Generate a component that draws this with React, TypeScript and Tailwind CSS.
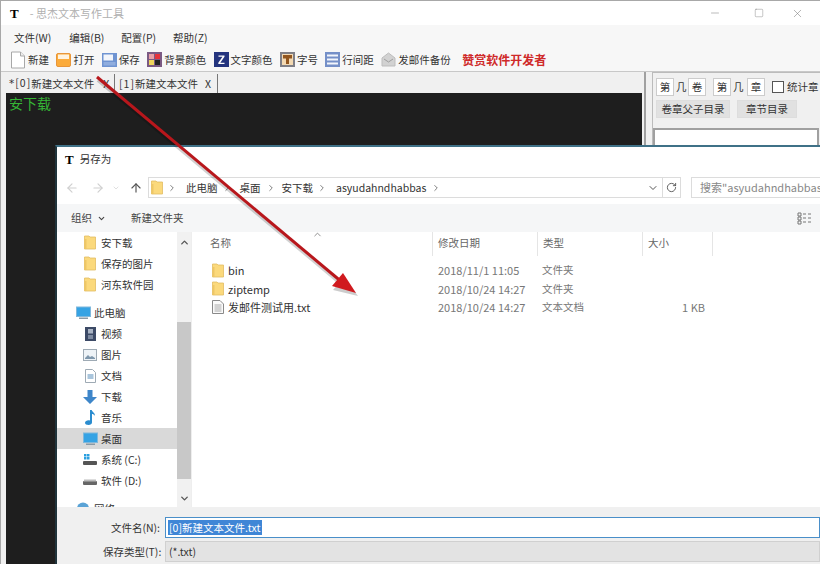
import { ArrowLeft, ArrowRight, ArrowUp, ChevronDown, ChevronRight, ChevronUp, Minus, RotateCw, Square, X } from 'lucide-react'

const FONT = "font-['Noto_Sans_CJK_SC','Liberation_Sans',sans-serif]"

function Folder() {
  return (
    <svg width="12" height="15" viewBox="0 0 12 15" className="shrink-0">
      <path d="M.5 1h4.500l1 1h5.500v12H.5z" fill="#fbd97c" stroke="#e2bd62" strokeWidth="0.8" />
      <path d="M.5 4h2v10h-2z" fill="#eec766" />
    </svg>
  )
}

function ToolIcon({ kind }: { kind: string }) {
  if (kind === 'new')
    return (
      <svg width="16" height="18" viewBox="0 0 16 18">
        <path d="M1.5 1h9l4 4v12h-13z" fill="#fff" stroke="#a8a8a8" />
        <path d="M10.5 1v4h4" fill="#eee" stroke="#a8a8a8" />
      </svg>
    )
  if (kind === 'open')
    return (
      <svg width="15" height="14" viewBox="0 0 15 14">
        <rect x="0.5" y="0.5" width="14" height="13" rx="1.5" fill="#fbab3b" stroke="#e8963a" />
        <rect x="2" y="1.5" width="11" height="4.5" fill="#fff3df" />
      </svg>
    )
  if (kind === 'save')
    return (
      <svg width="15" height="14" viewBox="0 0 15 14">
        <rect width="15" height="14" fill="#6f94d2" />
        <rect x="1.500" y="1.500" width="9.500" height="6" fill="#f2f5fb" />
        <rect x="1.500" y="9" width="12" height="3.500" fill="#8fadde" />
      </svg>
    )
  if (kind === 'bg')
    return (
      <svg width="15" height="15" viewBox="0 0 15 15">
        <rect width="15" height="15" fill="#7b5a83" />
        <rect x="2" y="2" width="5" height="5" fill="#e8a0a6" />
        <rect x="8" y="2" width="5" height="5" fill="#e5343c" />
        <rect x="2" y="8" width="5" height="5" fill="#efd55b" />
        <rect x="8" y="8" width="5" height="5" fill="#222" />
      </svg>
    )
  if (kind === 'color')
    return (
      <svg width="15" height="15" viewBox="0 0 15 15">
        <rect width="15" height="15" fill="#25357f" />
        <path d="M4.5 3.5h6v1.2l-4.2 6h4.2v1.300h-6.200v-1.200l4.200-6h-4z" fill="#fff" />
      </svg>
    )
  if (kind === 'size')
    return (
      <svg width="15" height="15" viewBox="0 0 15 15">
        <rect width="15" height="15" fill="#7f7f86" />
        <rect x="2" y="2" width="11" height="11" fill="#f3d9b2" />
        <path d="M3 3h9v3.500h-3v5.500h-3v-5.500h-3z" fill="#92561f" />
      </svg>
    )
  if (kind === 'line')
    return (
      <svg width="15" height="15" viewBox="0 0 15 15">
        <rect width="15" height="15" fill="#7590c8" />
        <rect x="2" y="2.500" width="11" height="2" fill="#f3f6fc" />
        <rect x="2" y="6.500" width="11" height="2" fill="#f3f6fc" />
        <rect x="2" y="10.500" width="11" height="2" fill="#f3f6fc" />
      </svg>
    )
  return (
    <svg width="15" height="15" viewBox="0 0 15 15">
      <path d="M1 6l6.500-5 6.500 5v8H1z" fill="#d2d2d2" stroke="#bdbdbd" />
      <path d="M3 7l4.500 3L12 7" fill="none" stroke="#9f9f9f" />
    </svg>
  )
}

function NavIcon({ kind }: { kind: string }) {
  if (kind === 'folder') return <Folder />
  if (kind === 'pc' || kind === 'desktop')
    return (
      <svg width="15" height="14" viewBox="0 0 15 14" className="shrink-0">
        <rect x="0.500" y="1" width="14" height="9.500" fill="#36a3e4" stroke="#7fb8dc" />
        <rect x="3" y="11.500" width="9" height="1.500" fill="#8a9aa6" />
      </svg>
    )
  if (kind === 'video')
    return (
      <svg width="11" height="14" viewBox="0 0 11 14" className="shrink-0">
        <rect width="11" height="14" fill="#3c4a66" />
        <rect x="3" y="2" width="5" height="4.500" fill="#aab4c4" />
        <rect x="3" y="8" width="5" height="4" fill="#7d8aa0" />
      </svg>
    )
  if (kind === 'image')
    return (
      <svg width="14" height="12" viewBox="0 0 14 12" className="shrink-0">
        <rect x="0.500" y="0.500" width="13" height="11" fill="#eef3f7" stroke="#9eaab4" />
        <path d="M2 9l3-3 2 2 2-1 3 2v1H2z" fill="#7f97ac" />
      </svg>
    )
  if (kind === 'doc')
    return (
      <svg width="11" height="14" viewBox="0 0 11 14" className="shrink-0">
        <path d="M.5.500h7l3 3v10H.5z" fill="#fff" stroke="#9eaab4" />
        <rect x="2.500" y="5" width="6" height="5" fill="#a9c5dc" />
      </svg>
    )
  if (kind === 'down')
    return (
      <svg width="14" height="14" viewBox="0 0 14 14" className="shrink-0">
        <path d="M4.500 0h5v7H14l-7 7-7-7h4.500z" fill="#3e86c9" />
      </svg>
    )
  if (kind === 'music')
    return (
      <svg width="11" height="15" viewBox="0 0 11 15" className="shrink-0">
        <path d="M5 0h1.800c.2 2 3.200 2.500 3.200 6-1-1.500-2-2-3-2v8.500C7 14 5.500 15 3.500 15 1.500 15 0 14 0 12.700S1.800 10.300 3.500 10.300c.6 0 1.100.1 1.500.3z" fill="#2a8ccf" />
      </svg>
    )
  if (kind === 'sys')
    return (
      <svg width="14" height="13" viewBox="0 0 14 13" className="shrink-0">
        <rect x="0" y="8" width="14" height="4" rx="1" fill="#555" />
        <rect x="1" y="1" width="2.500" height="2.500" fill="#2a9fe0" />
        <rect x="4" y="1" width="2.500" height="2.500" fill="#2a9fe0" />
        <rect x="1" y="4" width="2.500" height="2.500" fill="#2a9fe0" />
        <rect x="4" y="4" width="2.500" height="2.500" fill="#2a9fe0" />
      </svg>
    )
  if (kind === 'net')
    return (
      <svg width="14" height="13" viewBox="0 0 14 13" className="shrink-0">
        <circle cx="7" cy="6.500" r="6" fill="#5aa3d6" />
      </svg>
    )
  return (
    <svg width="14" height="13" viewBox="0 0 14 13" className="shrink-0">
      <rect x="0" y="7" width="14" height="4" rx="1" fill="#666" />
      <rect x="1" y="5.500" width="12" height="2" fill="#bbb" />
    </svg>
  )
}

const tools = [
  { kind: 'new', label: '新建' },
  { kind: 'open', label: '打开' },
  { kind: 'save', label: '保存' },
  { kind: 'bg', label: '背景颜色' },
  { kind: 'color', label: '文字颜色' },
  { kind: 'size', label: '字号' },
  { kind: 'line', label: '行间距' },
  { kind: 'mail', label: '发邮件备份' },
]

const navItems = [
  { kind: 'folder', label: '安下载', pad: 'pl-[26px]' },
  { kind: 'folder', label: '保存的图片', pad: 'pl-[26px]' },
  { kind: 'folder', label: '河东软件园', pad: 'pl-[26px]' },
  { kind: 'spacer', label: '', pad: '' },
  { kind: 'pc', label: '此电脑', pad: 'pl-[19px]' },
  { kind: 'video', label: '视频', pad: 'pl-[26px]' },
  { kind: 'image', label: '图片', pad: 'pl-[26px]' },
  { kind: 'doc', label: '文档', pad: 'pl-[26px]' },
  { kind: 'down', label: '下载', pad: 'pl-[26px]' },
  { kind: 'music', label: '音乐', pad: 'pl-[26px]' },
  { kind: 'desktop', label: '桌面', pad: 'pl-[26px]' },
  { kind: 'sys', label: '系统 (C:)', pad: 'pl-[26px]' },
  { kind: 'disk', label: '软件 (D:)', pad: 'pl-[26px]' },
  { kind: 'spacer', label: '', pad: '' },
  { kind: 'net', label: '网络', pad: 'pl-[19px]' },
]

const files = [
  { icon: 'folder', name: 'bin', date: '2018/11/1 11:05', type: '文件夹', size: '' },
  { icon: 'folder', name: 'ziptemp', date: '2018/10/24 14:27', type: '文件夹', size: '' },
  { icon: 'txt', name: '发邮件测试用.txt', date: '2018/10/24 14:27', type: '文本文档', size: '1 KB' },
]

function SaveDialog() {
  return (
    <div className="absolute left-[54px] top-[144px] flex h-[420px] w-[765px] flex-col border-l-2 border-t-2 border-l-[#20343c] border-t-[#3f7187] bg-white">
      <div className="flex h-[24px] shrink-0 items-center gap-[6px] pl-[8px] text-[10.5px] text-[#333]">
        <span className="font-['Liberation_Serif',serif] text-[13px] font-bold leading-none text-black">T</span>
        <span>另存为</span>
      </div>

      <div className="flex h-[33px] shrink-0 items-center pl-[8px]">
        <ArrowLeft size={14} className="shrink-0 text-[#d0d0d0]" />
        <ArrowRight size={14} className="ml-[12px] shrink-0 text-[#d0d0d0]" />
        <ChevronDown size={8} className="ml-[7px] shrink-0 text-[#d0d0d0]" />
        <ArrowUp size={14} className="ml-[9px] shrink-0 text-[#555]" />
        <div className="ml-[5px] flex h-[21px] w-[533px] shrink-0 items-center border border-[#dcdcdc] pl-[2px] text-[10.5px] text-[#333]">
          <Folder />
          <ChevronRight size={10} className="ml-[4px] shrink-0 text-[#666]" />
          <span className="ml-[9px]">此电脑</span>
          <ChevronRight size={10} className="ml-[4px] shrink-0 text-[#666]" />
          <span className="ml-[8px]">桌面</span>
          <ChevronRight size={10} className="ml-[5px] shrink-0 text-[#666]" />
          <span className="ml-[6px]">安下载</span>
          <ChevronRight size={10} className="ml-[4px] shrink-0 text-[#666]" />
          <span className="ml-[9px]">asyudahndhabbas</span>
          <ChevronRight size={10} className="ml-[5px] shrink-0 text-[#666]" />
          <ChevronDown size={12} className="ml-auto mr-[3px] shrink-0 text-[#555]" />
          <div className="flex h-full w-[18px] shrink-0 items-center justify-center border-l border-[#dcdcdc]">
            <RotateCw size={11} className="text-[#555]" />
          </div>
        </div>
        <div className="ml-[10px] flex h-[21px] w-[135px] shrink-0 items-center overflow-hidden whitespace-nowrap border border-[#dcdcdc] pl-[8px] text-[11px] text-[#888]">
          搜索"asyudahndhabbas
        </div>
      </div>

      <div className="flex h-[28px] shrink-0 items-center bg-[#f5f6f7] pl-[14px] pr-[8px] text-[10.5px] text-[#444]">
        <span>组织</span>
        <ChevronDown size={9} strokeWidth={3} className="ml-[5px] text-[#444]" />
        <span className="ml-[25px]">新建文件夹</span>
        <svg width="15" height="13" viewBox="0 0 15 13" className="ml-auto text-[#777]">
          <path d="M1 1h3v3H1zM1 5h3v3H1zM1 9h3v3H1z" fill="none" stroke="currentColor" />
          <path d="M6 2h3M11 2h3M6 6h3M11 6h3M6 10h3M11 10h3" stroke="currentColor" />
        </svg>
      </div>

      <div className="flex min-h-0 flex-1">
        <div className="w-[120px] shrink-0 overflow-hidden text-[10.5px] text-[#333]">
          {navItems.map((n, i) =>
            n.kind === 'spacer' ? (
              <div key={i} className="h-[7px]" />
            ) : (
              <div key={i} className={`flex h-[21px] items-center gap-[4px] ${n.pad} ${n.label === '桌面' ? 'bg-[#d9d9d9]' : ''}`}>
                <span className="flex w-[14px] justify-center">
                  <NavIcon kind={n.kind} />
                </span>
                <span className="whitespace-nowrap">{n.label}</span>
              </div>
            ),
          )}
        </div>
        <div className="flex w-[15px] shrink-0 flex-col items-center border-r border-[#eeeeee] bg-[#f1f1f1]">
          <ChevronUp size={11} strokeWidth={3} className="mt-[5px] text-[#555]" />
          <div className="mt-[74px] h-[157px] w-full bg-[#c8c8c8]" />
          <ChevronDown size={11} strokeWidth={3} className="mt-[14px] text-[#555]" />
        </div>

        <div className="min-w-0 flex-1 pl-[13px] text-[10.5px]">
          <div className="relative flex h-[24px] items-center text-[#666]">
            <ChevronUp size={11} className="absolute left-[107px] top-[-3px] text-[#888]" />
            <div className="h-full w-[227px] pl-[5px] pt-[3px]">名称</div>
            <div className="h-full w-[105px] border-l border-[#e5e5e5] pl-[5px] pt-[3px]">修改日期</div>
            <div className="h-full w-[105px] border-l border-[#e5e5e5] pl-[5px] pt-[3px]">类型</div>
            <div className="h-full w-[71px] border-r border-l border-[#e5e5e5] pl-[5px] pt-[3px]">大小</div>
          </div>
          <div className="pt-[5px]">
            {files.map((f) => (
              <div key={f.name} className="flex h-[18.500px] items-center text-[11px]">
                <div className="flex w-[227px] items-center gap-[4px] pl-[7px] text-[#333]">
                  {f.icon === 'folder' ? (
                    <Folder />
                  ) : (
                    <svg width="12" height="14" viewBox="0 0 12 14" className="shrink-0">
                      <path d="M.5.500h7.500l3.500 3.500v9.500H.5z" fill="#fafafa" stroke="#8a8a8a" />
                      <path d="M2.500 5h7M2.500 7h7M2.500 9h7M2.500 11h7" stroke="#aaa" />
                    </svg>
                  )}
                  <span className="whitespace-nowrap">{f.name}</span>
                </div>
                <div className="w-[105px] whitespace-nowrap pl-[6px] text-[#777]">{f.date}</div>
                <div className="w-[60px] pl-[5px] text-[10.5px] text-[#777]">{f.type}</div>
                <div className="w-[108px] text-right text-[#777]">{f.size}</div>
              </div>
            ))}
          </div>
        </div>
      </div>

      <div className="h-[58px] shrink-0 bg-[#f0f0f0] pl-[46px] pt-[10px] text-[10.5px] text-[#333]">
        <div className="flex h-[21px] items-center">
          <span className="w-[57px] whitespace-nowrap text-right">文件名(N):</span>
          <div className="ml-[5px] flex h-[21px] flex-1 items-center border border-[#4a8fc9] bg-white pl-[2px]">
            <span className="bg-[#3f86d6] px-[1px] leading-[15px] text-white">[0]新建文本文件.txt</span>
          </div>
        </div>
        <div className="mt-[3px] flex h-[21px] items-center">
          <span className="w-[57px] whitespace-nowrap text-right">保存类型(T):</span>
          <div className="ml-[5px] flex h-[21px] flex-1 items-center border border-[#d0d0d0] bg-[#e3e3e3] pl-[3px]">(*.txt)</div>
        </div>
      </div>
    </div>
  )
}

export default function App() {
  return (
    <div className={`relative h-[564px] w-[820px] overflow-hidden border-l border-t border-[#a8a8a8] bg-[#f0f0f0] ${FONT}`}>
      <div className="flex h-[24px] items-center bg-white pl-[9px] pr-[16px]">
        <span className="font-['Liberation_Serif',serif] text-[13px] font-bold leading-none text-black">T</span>
        <span className="ml-[11px] text-[11px] text-[#b0b0b0]">- 思杰文本写作工具</span>
        <Minus size={12} strokeWidth={1} className="ml-auto text-[#777]" />
        <Square size={10} strokeWidth={1} className="ml-[33px] text-[#777]" />
        <X size={13} strokeWidth={1} className="ml-[27px] text-[#777]" />
      </div>

      <div className="flex h-[26px] items-center bg-[#f7f7f7] text-[10.5px] text-[#333]">
        <span className="ml-[13px]">文件(W)</span>
        <span className="ml-[18px]">编辑(B)</span>
        <span className="ml-[17px]">配置(P)</span>
        <span className="ml-[17px]">帮助(Z)</span>
      </div>

      <div className="flex h-[21px] items-center border-b border-[#c8c8c8] bg-[#f7f7f7] pb-[3px] pl-[9px] text-[10.5px] text-[#333]">
        {tools.map((t) => (
          <div key={t.kind} className="mr-[7.4px] flex items-center gap-[2px]">
            <ToolIcon kind={t.kind} />
            <span className="whitespace-nowrap">{t.label}</span>
          </div>
        ))}
        <span className="ml-[4px] whitespace-nowrap text-[12px] font-bold text-[#cf2a2a]">赞赏软件开发者</span>
      </div>

      <div className="flex h-[492px]">
        <div className="w-[645px] shrink-0 border-r-2 border-[#a0a0a0] pl-[5px]">
          <div className="flex h-[21px] items-center whitespace-nowrap pt-[2px] text-[10.5px] text-[#333]">
            <div className="flex h-full w-[109px] items-center border-r border-[#777] pl-[3px]">
              <span className="tracking-[1px]">
                <span className="font-['DejaVu_Sans',sans-serif]">*</span>[0]
              </span>
              新建文本文件
              <span className="ml-[9px]">X</span>
            </div>
            <div className="flex h-full w-[103px] items-center border-r border-[#777] pl-[4px]">
              <span className="tracking-[1px]">[1]</span>
              新建文本文件
              <span className="ml-[7px]">X</span>
            </div>
          </div>
          <div className="h-full w-[636px] bg-[#1e1e1e] pl-[3px] text-[14px] leading-[20px] text-[#35b535]">安下载</div>
        </div>

        <div className="ml-[6px] min-w-0 flex-1 border-l border-t border-[#bbb] pl-[3px] pt-[5px] text-[10.5px] text-[#333]">
          <div className="flex h-[18px] items-center">
            <span className="flex h-[18px] w-[18px] items-center justify-center border border-[#ccc] bg-white">第</span>
            <span className="ml-[2px] w-[12px]">几</span>
            <span className="flex h-[18px] w-[18px] items-center justify-center border border-[#ccc] bg-white">卷</span>
            <span className="ml-[7px] flex h-[18px] w-[18px] items-center justify-center border border-[#ccc] bg-white">第</span>
            <span className="ml-[2px] w-[14px]">几</span>
            <span className="flex h-[18px] w-[18px] items-center justify-center border border-[#ccc] bg-white">章</span>
            <span className="ml-[7px] h-[12px] w-[12px] border border-[#555] bg-white" />
            <span className="ml-[3px] whitespace-nowrap">统计章</span>
          </div>
          <div className="mt-[4px] flex">
            <span className="flex h-[18px] w-[74px] items-center justify-center border border-[#ddd] bg-[#e1e1e1]">卷章父子目录</span>
            <span className="ml-[7px] flex h-[18px] w-[60px] items-center justify-center border border-[#ddd] bg-[#e1e1e1]">章节目录</span>
          </div>
          <div className="-ml-[3px] mt-[10px] h-[40px] w-[166px] border-2 border-[#a0a0a0] bg-white" />
        </div>
      </div>

      <SaveDialog />

      {/* red annotation arrow */}
      <svg width="820" height="564" viewBox="0 0 820 564" className="pointer-events-none absolute left-[-1px] top-[-1px]">
        <path d="M97 77L343 283" stroke="#000" strokeOpacity="0.18" strokeWidth="4" transform="translate(1 3)" />
        <path d="M357 293L332 287L343 274Z" fill="#000" fillOpacity="0.2" transform="translate(1 3)" />
        <path d="M97 77L343 283" stroke="#b8171c" strokeWidth="3" />
        <path d="M356 293L332 286L343 273Z" fill="#d01a1e" />
      </svg>
    </div>
  )
}
